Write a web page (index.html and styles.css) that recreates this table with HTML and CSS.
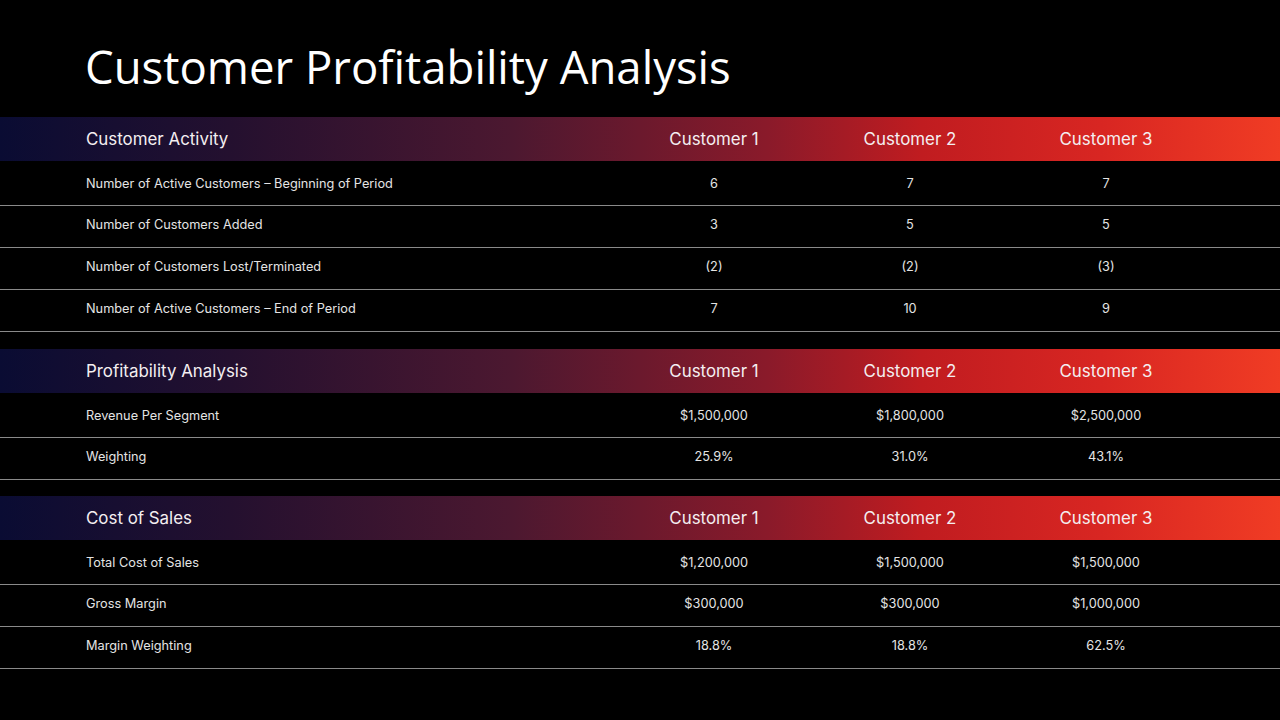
FILE: index.html
```html
<!DOCTYPE html>
<html>
<head>
<meta charset="utf-8">
<link rel="stylesheet" href="styles.css">
</head>
<body>
<div class="slide">
  <h1 class="title">Customer Profitability Analysis</h1>

  <section class="block">
    <div class="band">
      <div class="label">Customer Activity</div>
      <div class="col">Customer 1</div>
      <div class="col">Customer 2</div>
      <div class="col">Customer 3</div>
    </div>
    <div class="row"><div class="label">Number of Active Customers – Beginning of Period</div><div class="col">6</div><div class="col">7</div><div class="col">7</div></div>
    <div class="row"><div class="label">Number of Customers Added</div><div class="col">3</div><div class="col">5</div><div class="col">5</div></div>
    <div class="row"><div class="label">Number of Customers Lost/Terminated</div><div class="col">(2)</div><div class="col">(2)</div><div class="col">(3)</div></div>
    <div class="row"><div class="label">Number of Active Customers – End of Period</div><div class="col">7</div><div class="col">10</div><div class="col">9</div></div>
  </section>

  <section class="block">
    <div class="band">
      <div class="label">Profitability Analysis</div>
      <div class="col">Customer 1</div>
      <div class="col">Customer 2</div>
      <div class="col">Customer 3</div>
    </div>
    <div class="row"><div class="label">Revenue Per Segment</div><div class="col">$1,500,000</div><div class="col">$1,800,000</div><div class="col">$2,500,000</div></div>
    <div class="row"><div class="label">Weighting</div><div class="col">25.9%</div><div class="col">31.0%</div><div class="col">43.1%</div></div>
  </section>

  <section class="block last">
    <div class="band">
      <div class="label">Cost of Sales</div>
      <div class="col">Customer 1</div>
      <div class="col">Customer 2</div>
      <div class="col">Customer 3</div>
    </div>
    <div class="row"><div class="label">Total Cost of Sales</div><div class="col">$1,200,000</div><div class="col">$1,500,000</div><div class="col">$1,500,000</div></div>
    <div class="row"><div class="label">Gross Margin</div><div class="col">$300,000</div><div class="col">$300,000</div><div class="col">$1,000,000</div></div>
    <div class="row"><div class="label">Margin Weighting</div><div class="col">18.8%</div><div class="col">18.8%</div><div class="col">62.5%</div></div>
  </section>
</div>
</body>
</html>
```

FILE: styles.css
```css
* { box-sizing: border-box; }
html, body { margin: 0; padding: 0; background: #000; }
.slide {
  width: 1280px;
  height: 720px;
  background: #000;
  color: #fff;
  display: flex;
  flex-direction: column;
  overflow: hidden;
}
.title {
  margin: 0;
  padding: 38px 0 0 85px;
  height: 117px;
  font-family: "Open Sans", "DejaVu Sans", sans-serif;
  font-weight: 400;
  font-size: 45.5px;
  line-height: 56px;
  color: #fff;
  letter-spacing: 0;
}
.block { display: flex; flex-direction: column; }
.block + .block { margin-top: 17px; }
.block.last { margin-top: 16px; }
.band, .row {
  display: grid;
  grid-template-columns: 86px 530px 196px 196px 196px 76px;
  align-items: center;
}
.band::before, .row::before { content: ""; }
.band {
  height: 44px;
  background: linear-gradient(90deg, #0a0c33 0%, #24102f 18%, #4c1830 40%, #8a1a2a 60%, #c01c20 72%, #d82622 86%, #f03c24 100%);
  font-family: "Inter", "Noto Sans", sans-serif;
  font-size: 16.9px;
  color: #f4eef0;
}
.row {
  height: 42px;
  padding-bottom: 4px;
  border-bottom: 1px solid #8a8a8a;
  font-family: "Inter", "Noto Sans", sans-serif;
  font-size: 12.75px;
  color: #e4e4e4;
}
.band + .row { height: 45px; padding-bottom: 0; }
.col { text-align: center; }
```
